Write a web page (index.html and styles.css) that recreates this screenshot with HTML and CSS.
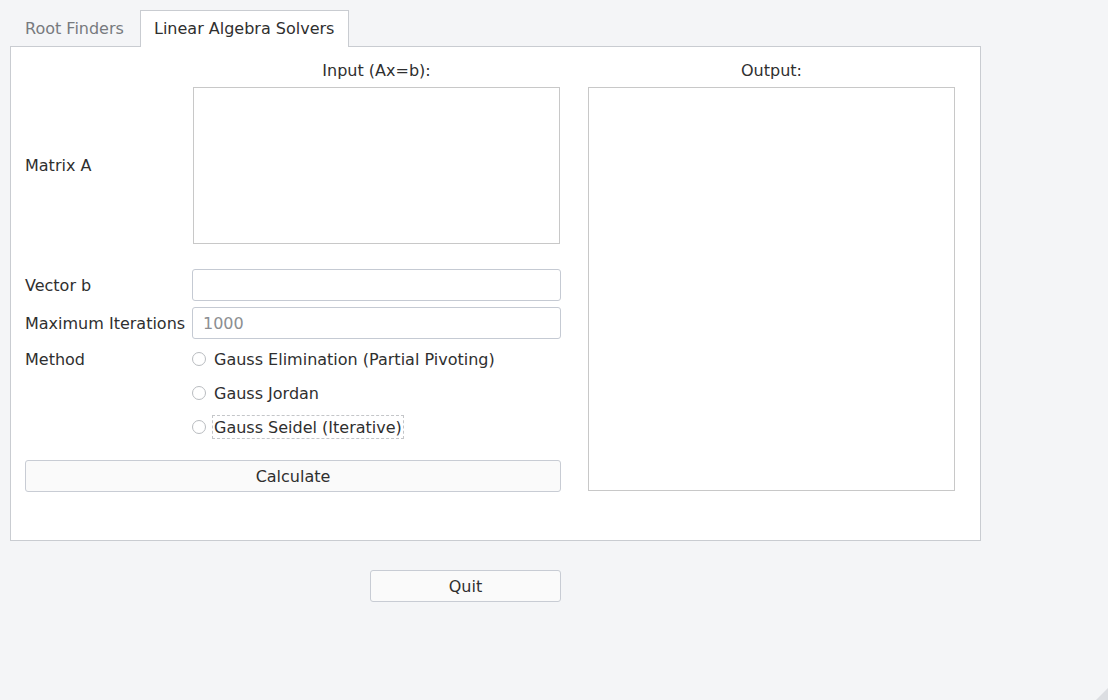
FILE: index.html
```html
<!DOCTYPE html>
<html>
<head>
<meta charset="utf-8">
<link rel="stylesheet" href="styles.css">
</head>
<body>
<div class="window">
  <div class="tabbar">
    <div class="tab">Root Finders</div>
    <div class="tab active">Linear Algebra Solvers</div>
  </div>
  <div class="pane">
    <div class="left">
      <div class="header-row">
        <div class="label-col"></div>
        <div class="field-col heading">Input (Ax=b):</div>
      </div>
      <div class="row matrix-row">
        <div class="label-col">Matrix A</div>
        <div class="field-col"><div class="textarea matrix"></div></div>
      </div>
      <div class="row vector-row">
        <div class="label-col">Vector b</div>
        <div class="field-col"><div class="input"></div></div>
      </div>
      <div class="row iter-row">
        <div class="label-col">Maximum Iterations</div>
        <div class="field-col"><div class="input"><span class="placeholder">1000</span></div></div>
      </div>
      <div class="row method-row">
        <div class="label-col method-label">Method</div>
        <div class="field-col radios">
          <div class="radio"><span class="circle"></span><span class="rtext">Gauss Elimination (Partial Pivoting)</span></div>
          <div class="radio"><span class="circle"></span><span class="rtext">Gauss Jordan</span></div>
          <div class="radio"><span class="circle"></span><span class="rtext focus">Gauss Seidel (Iterative)</span></div>
        </div>
      </div>
      <div class="button calc">Calculate</div>
    </div>
    <div class="right">
      <div class="heading">Output:</div>
      <div class="textarea output"></div>
    </div>
  </div>
  <div class="bottom">
    <div class="button quit">Quit</div>
  </div>
</div>
<svg class="grip" width="12" height="12" viewBox="0 0 12 12">
  <path d="M12 0 L12 12 L0 12 Z" fill="#dcdee2"/>
</svg>
</body>
</html>
```
FILE: styles.css
```css
html, body {
  margin: 0;
  padding: 0;
  height: 100%;
}
body {
  background: #f4f5f7;
  font-family: "DejaVu Sans", sans-serif;
  font-size: 16px;
  color: #2f2f2f;
  position: relative;
  overflow: hidden;
}
.window {
  padding: 10px 0 0 10px;
}
.tabbar {
  display: flex;
  height: 37px;
}
.tab {
  box-sizing: border-box;
  height: 37px;
  line-height: 36px;
  padding: 1px 14px 0 15px;
  color: #777a7e;
  width: 130px;
  white-space: nowrap;
}
.tab.active {
  width: 209px;
  padding: 0 13px;
  color: #2f2f2f;
  background: #ffffff;
  border: 1px solid #c9ccd1;
  border-bottom: none;
  position: relative;
  z-index: 1;
}
.pane {
  box-sizing: border-box;
  width: 971px;
  height: 495px;
  margin-top: -1px;
  background: #ffffff;
  border: 1px solid #c9ccd1;
  padding: 14px 0 0 14px;
  display: flex;
  gap: 27px;
}
.left {
  width: 536px;
  display: flex;
  flex-direction: column;
}
.header-row, .row {
  display: flex;
}
.label-col {
  width: 167px;
  flex: none;
  white-space: nowrap;
  line-height: 19px;
}
.field-col {
  width: 369px;
  flex: none;
}
.heading {
  text-align: center;
  height: 17px;
  line-height: 17px;
  margin-top: 1px;
  margin-bottom: 8px;
}
.row {
  align-items: center;
}
.textarea {
  box-sizing: border-box;
  background: #ffffff;
  border: 1px solid #c8c8c8;
}
.matrix {
  height: 157px;
  margin: 0 1px;
}
.vector-row {
  margin-top: 25px;
}
.iter-row {
  margin-top: 6px;
}
.input {
  box-sizing: border-box;
  height: 32px;
  border: 1px solid #c5cad3;
  border-radius: 3px;
  background: #ffffff;
  padding: 2px 0 0 10px;
  line-height: 28px;
}
.placeholder {
  color: #8c8e91;
}
.method-row {
  margin-top: 8px;
  align-items: flex-start;
}
.method-label {
  line-height: 24px;
  padding-top: 1px;
}
.radios {
  display: flex;
  flex-direction: column;
  gap: 10px;
}
.radio {
  display: flex;
  align-items: center;
  height: 24px;
  white-space: nowrap;
}
.circle {
  box-sizing: border-box;
  width: 14px;
  height: 14px;
  border: 1px solid #b9bcc0;
  border-radius: 50%;
  background: #ffffff;
  margin-right: 6px;
  flex: none;
}
.rtext {
  box-sizing: border-box;
  height: 24px;
  line-height: 20px;
  padding: 2px 1px 0 1px;
  border: 1px solid transparent;
}
.rtext.focus {
  border: 1px dashed #c4c6c9;
}
.button {
  box-sizing: border-box;
  height: 32px;
  line-height: 28px;
  padding-top: 2px;
  text-align: center;
  background: #fafafa;
  border: 1px solid #c8ccd4;
  border-radius: 3px;
}
.calc {
  margin-top: 21px;
  width: 536px;
}
.right {
  width: 367px;
  display: flex;
  flex-direction: column;
}
.output {
  height: 404px;
}
.bottom {
  padding: 29px 0 0 360px;
}
.quit {
  width: 191px;
}
.grip {
  position: absolute;
  right: 0;
  bottom: 0;
}
```
